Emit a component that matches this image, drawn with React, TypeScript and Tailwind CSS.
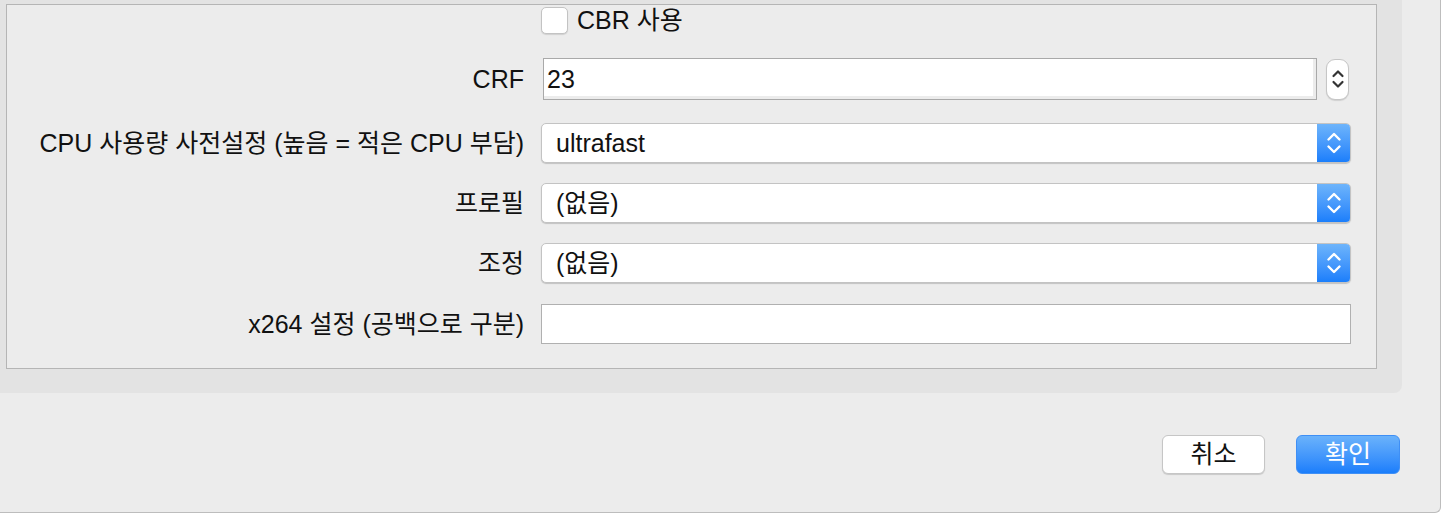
import React from 'react';

const font = { fontFamily: '"Liberation Sans", "Noto Sans CJK KR", sans-serif' };

// Blue up/down arrows of a popup button
const PopupArrows = ({ color = '#ffffff' }: { color?: string }) => (
  <svg width="16" height="26" viewBox="0 0 16 26" fill="none">
    <path d="M2.5 9.5 L8 4 L13.5 9.5" stroke={color} strokeWidth="2.4" strokeLinecap="round" strokeLinejoin="round" />
    <path d="M2.5 16.5 L8 22 L13.5 16.5" stroke={color} strokeWidth="2.4" strokeLinecap="round" strokeLinejoin="round" />
  </svg>
);

const PopupButton = ({ value }: { value: string }) => (
  <div className="flex h-[40px] w-[810px] overflow-hidden rounded-[5px] border border-[#c3c3c3] bg-white shadow-[0_1px_1px_rgba(0,0,0,0.18)]">
    <div className="flex flex-1 items-center pl-[14px] text-[25px] leading-none text-[#111]">{value}</div>
    <div className="flex w-[33px] items-center justify-center bg-gradient-to-b from-[#6db4fb] to-[#1a7efb]">
      <PopupArrows />
    </div>
  </div>
);

const Row = ({ label, children, className = '' }: { label: string; children: React.ReactNode; className?: string }) => (
  <div className={`flex items-center ${className}`}>
    <div className="w-[517px] whitespace-nowrap text-right text-[25px] leading-none text-[#111]">{label}</div>
    <div className="ml-[17px] flex items-center">{children}</div>
  </div>
);

export default function App() {
  return (
    <div className="h-[514px] w-[1444px] overflow-hidden bg-white" style={font}>
      <div className="h-[513px] w-[1441px] rounded-br-[6px] border-r border-b border-[#bdbdbd] bg-[#ececec]">
        {/* Settings panel */}
        <div className="h-[393px] w-[1402px] rounded-br-[8px] bg-[#e3e3e3] pl-[6px] pt-[4px]">
          <div className="h-[365px] w-[1371px] border border-[#b5b5b5] bg-[#ececec]">
            {/* CBR */}
            <div className="ml-[534px] mt-[1px] flex h-[29px] items-center">
              <div className="h-[27px] w-[27px] rounded-[5px] border border-[#c3c3c3] bg-white shadow-[0_1px_1px_rgba(0,0,0,0.12)]" />
              <span className="ml-[9px] text-[25px] leading-none text-[#111]">CBR 사용</span>
            </div>

            <Row label="CRF" className="mt-[23px]">
              <div className="ml-[2px] flex h-[42px] w-[774px] items-center border border-[#a9a9a9] bg-white pl-[3px] text-[25px] leading-none text-[#111] shadow-[inset_-3px_-3px_0_#ececec]">
                23
              </div>
              <div className="ml-[9px] flex h-[41px] w-[23px] items-center justify-center rounded-[9px] border border-[#c6c6c6] bg-white shadow-[0_1px_1px_rgba(0,0,0,0.12)]">
                <svg width="14" height="26" viewBox="0 0 14 26" fill="none">
                  <path d="M2.5 10 L7 5.5 L11.5 10" stroke="#333" strokeWidth="2.2" strokeLinecap="round" strokeLinejoin="round" />
                  <path d="M2.5 16 L7 20.5 L11.5 16" stroke="#333" strokeWidth="2.2" strokeLinecap="round" strokeLinejoin="round" />
                </svg>
              </div>
            </Row>

            <Row label="CPU 사용량 사전설정 (높음 = 적은 CPU 부담)" className="mt-[23px]">
              <PopupButton value="ultrafast" />
            </Row>

            <Row label="프로필" className="mt-[20px]">
              <PopupButton value="(없음)" />
            </Row>

            <Row label="조정" className="mt-[20px]">
              <PopupButton value="(없음)" />
            </Row>

            <Row label="x264 설정 (공백으로 구분)" className="mt-[21px]">
              <div className="h-[40px] w-[810px] border border-[#b0b0b0] bg-white" />
            </Row>
          </div>
        </div>

        {/* Dialog buttons */}
        <div className="mr-[40px] mt-[42px] flex justify-end gap-[31px]">
          <button className="h-[39px] w-[103px] rounded-[6px] border border-[#c6c6c6] bg-white text-[25px] leading-none text-[#111] shadow-[0_1px_1px_rgba(0,0,0,0.15)]">
            취소
          </button>
          <button className="h-[39px] w-[104px] rounded-[6px] border border-[#3f8ff5] bg-gradient-to-b from-[#6ab2fb] to-[#1a7efb] text-[25px] leading-none text-white">
            확인
          </button>
        </div>
      </div>
    </div>
  );
}
